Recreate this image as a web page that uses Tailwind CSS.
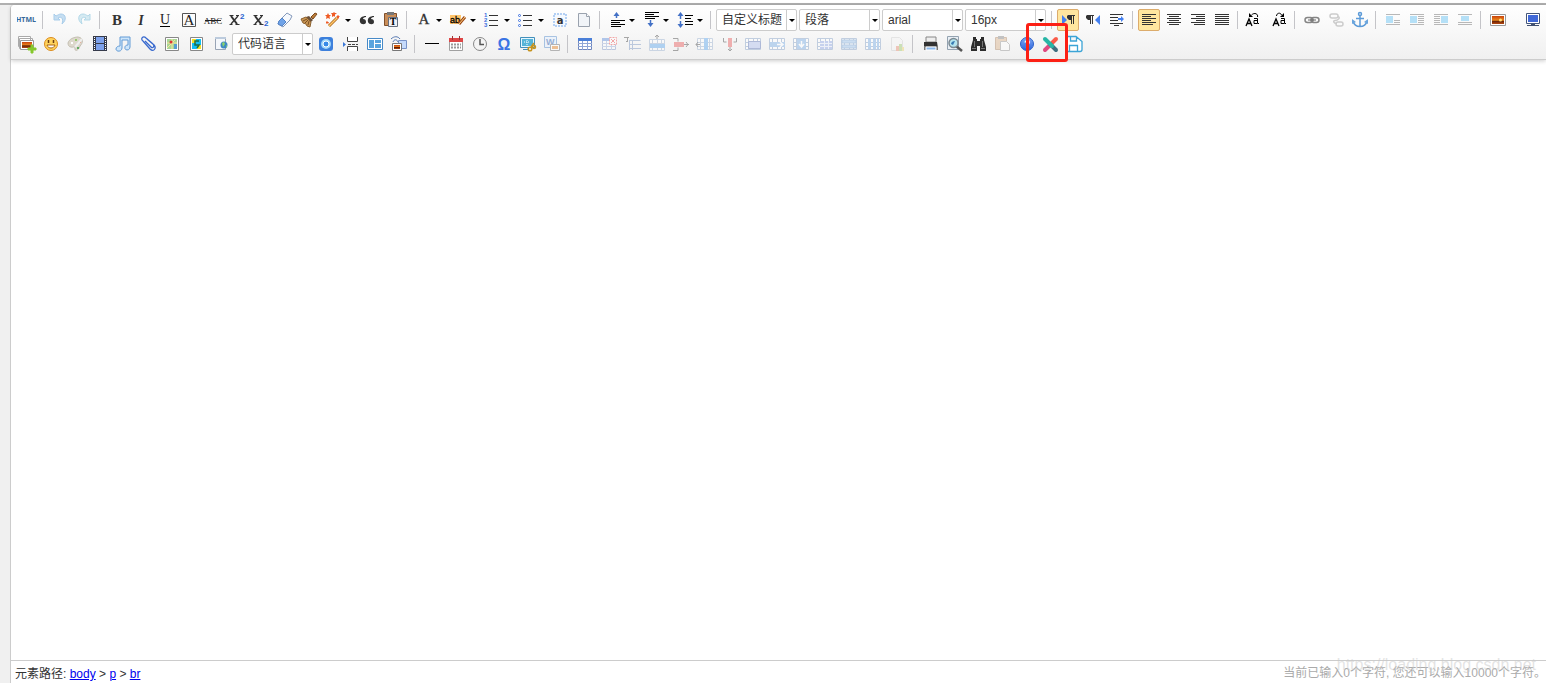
<!DOCTYPE html>
<html lang="zh-CN">
<head>
<meta charset="utf-8">
<title>UEditor</title>
<script src="https://cdn.jsdelivr.net/npm/@tailwindcss/browser@4"></script>
</head>
<body class="h-screen overflow-hidden bg-white font-['Liberation_Sans','Noto_Sans_CJK_SC',sans-serif] text-xs text-[#333]">

<!-- Shared icon parts -->
<svg class="absolute size-0" aria-hidden="true">
  <defs>
    <linearGradient id="ball" x2="0" y2="1"><stop stop-color="#7eaaf2"/><stop offset="1" stop-color="#2c63dc"/></linearGradient>
    <linearGradient id="sun" x2="0" y2="1"><stop stop-color="#c8420c"/><stop offset=".55" stop-color="#ee8a1c"/><stop offset=".6" stop-color="#5a1c06"/><stop offset="1" stop-color="#b8480e"/></linearGradient>
    <path id="arrow" d="M22 9h6l-3 3z" fill="#000"/>
    <g id="photo"><path d="M2.500 4.500h15v11h-15z" fill="#fff" stroke="#9a9a9a"/><path d="M4 6h12v8H4z" fill="url(#sun)"/><circle cx="12.500" cy="10" r="1.500" fill="#ffe27a"/></g>
    <g id="grid"><path d="M3.500 4.500h13v11h-13z" fill="#fff" stroke="#6f86bd"/><path d="M3 4h14v3H3z" fill="#4a7fd8"/><path d="M3 9.500h14M3 12.500h14M7.500 7v9M12.500 7v9" stroke="#8fa6d6" fill="none"/></g>
    <g id="cells"><path d="M2.500 4.500h15v11h-15zM2 8.500h16M2 12.500h16M5.500 4v12M10.500 4v12M14.500 4v12" fill="#fff" stroke="#8fa9cc"/></g>
    <path id="pilcrow" d="M6 5h7v1h-1v8h-1V6h-1v8H9v-4H7L5 8V6z" fill="#333"/>
    <g id="bigx" fill="none" stroke="#333"><path d="M4 6l6 8" stroke-width="2"/><path d="M11 6l-7 8" stroke-width="1.300"/><path d="M2.500 5.500h4M9 5.500h3M2.500 14.500h3M8.500 14.500h4"/></g>
  </defs>
</svg>

<div class="flex h-full flex-col pt-[3px]">
  <div class="h-0.5 shrink-0 bg-[#b0b0b0]"></div>
  <div class="flex min-h-0 flex-1 bg-[#f0f0f0] pl-2.5">
    <main class="flex min-w-0 flex-1 flex-col rounded-tl border-l border-[#ccc] bg-white">

      <div role="toolbar" aria-label="编辑器工具栏" class="rounded-tl border-b border-[#ccc] bg-linear-to-b from-white to-[#f0f0f0] pt-[3px] pb-[3px] shadow-[0_1px_4px_rgba(0,0,0,0.2)] [&_button]:flex [&_button]:h-6 [&_button]:w-6 [&_button]:shrink-0 [&_button]:items-center [&_button]:justify-center [&_hr]:mr-[5px] [&_hr]:ml-[3px] [&_hr]:h-[18px] [&_hr]:w-px [&_hr]:shrink-0 [&_hr]:border-0 [&_hr]:bg-[#c4c4c8] [&_label]:mr-0.5 [&_label]:grid [&_label]:w-[81px] [&_label]:shrink-0 [&_select]:col-start-1 [&_select]:row-start-1 [&_select]:h-[22px] [&_select]:w-full [&_select]:appearance-none [&_select]:rounded-xs [&_select]:border [&_select]:border-[#ccc] [&_select]:bg-white [&_select]:pl-[5px] [&_select]:text-xs">

        <div class="flex h-6 items-center pl-1">
          <button aria-label="源代码"><svg width="20" height="20"><text x="9" y="12" text-anchor="middle" font-size="7" font-weight="bold" font-family="Open Sans" fill="#35689a">HTML</text></svg></button><hr>
          <button aria-label="撤销"><svg width="20" height="20"><path d="M4 4v6h6L8 8c3-2 6 0 4 6 5-4 4-10-1-10-2 0-3 1-5 2z" fill="#c5def2" stroke="#a9cdea"/></svg></button>
          <button aria-label="重做"><svg width="20" height="20"><path d="M16 4v6h-6l2-2c-3-2-6 0-4 6-5-4-4-10 1-10 2 0 3 1 5 2z" fill="#d5eaf2" stroke="#b4d9e9"/></svg></button><hr>
          <button aria-label="加粗"><svg width="20" height="20"><text x="10" y="15" text-anchor="middle" font-family="Liberation Serif" font-weight="bold" font-size="15" fill="#333">B</text></svg></button>
          <button aria-label="斜体"><svg width="20" height="20"><text x="10" y="15" text-anchor="middle" font-family="Liberation Serif" font-weight="bold" font-style="italic" font-size="14" fill="#333">I</text></svg></button>
          <button aria-label="下划线"><svg width="20" height="20"><text x="10" y="14" text-anchor="middle" font-family="Liberation Serif" font-size="14" fill="#222">U</text><path d="M5 16.500h10" stroke="#000"/></svg></button>
          <button aria-label="字符边框"><svg width="20" height="20"><path d="M3.500 3.500h13v13h-13z" fill="none" stroke="#555"/><text x="10" y="15" text-anchor="middle" font-family="Liberation Serif" font-size="15" fill="#222">A</text></svg></button>
          <button aria-label="删除线"><svg width="20" height="20"><text x="10" y="14" text-anchor="middle" font-family="Liberation Serif" font-size="9" fill="#222">ABC</text><path d="M2 10.500h16" stroke="#222"/></svg></button>
          <button aria-label="上标"><svg width="20" height="20"><use href="#bigx"/><text x="13" y="9" font-size="8" font-weight="bold" fill="#2a62d0">2</text></svg></button>
          <button aria-label="下标"><svg width="20" height="20"><use href="#bigx"/><text x="13" y="16" font-size="8" font-weight="bold" fill="#2a62d0">2</text></svg></button>
          <button aria-label="清除格式"><svg width="20" height="20"><path d="M12 3l5 3-2 4-7 7-5-3 1-3z" fill="#f6f9fd" stroke="#8499bb"/><path d="M7 8l4 4-4 4-4-2 1-3z" fill="#6fa3e8" stroke="#5484c8"/></svg></button>
          <button aria-label="格式刷"><svg width="20" height="20"><path d="M16 3l2 1-4 5-2-2z" fill="#bb7d3b" stroke="#7e4a1c"/><path d="M10 6l4 4-2 2-5-5z" fill="#6b513b"/><path d="M7 7l5 5-1 5-3-1-1-2-3-1-1-2-1-2z" fill="#c99553" stroke="#8c6231"/><path d="M4 11l4-2M6 13l3-3M9 15l1-4" stroke="#795023"/></svg></button>
          <button class="w-[34px]!" aria-label="自动排版"><svg width="30" height="20"><path d="M6 16l8-8" stroke="#a96418" stroke-width="3"/><path d="M6 16l8-8" stroke="#ffc66a" stroke-width="1.500"/><path d="M5 3l1 2h2L6.500 6.500 7 9 5 8 3 9l.5-2.500L2 5h2zM11 2l1 1h2l-2 1.500V7l-1-1-2 1V4.500L8 3h2zM15 5l1 1h1l-1 1v2l-1-1-1 1V7l-1-1h1zM4 11l1 1h1l-1 2-1-1-1 1v-2z" fill="#ef5b25"/><use href="#arrow"/></svg></button>
          <button aria-label="引用"><svg width="20" height="20"><path d="M9 6C5 6 2 8 3 12c1 3 6 3 6 0 0-2-1-3-3-3 0-1 1-2 3-2zM17 6c-4 0-7 2-6 6 1 3 6 3 6 0 0-2-1-3-3-3 0-1 1-2 3-2z" fill="#333"/></svg></button>
          <button aria-label="纯文本粘贴"><svg width="20" height="20"><path d="M3.500 3.500h12v12h-12z" fill="#c98d58" stroke="#80502c"/><path d="M6 2h7v3H6z" fill="#777"/><path d="M7.500 7.500h9v9h-9z" fill="#eef1f7" stroke="#666e7e"/><text x="12" y="15" text-anchor="middle" font-family="Liberation Serif" font-weight="bold" font-size="10">T</text></svg></button><hr>
          <button class="w-[34px]!" aria-label="字体颜色"><svg width="30" height="20"><text x="10" y="14" text-anchor="middle" font-family="Liberation Serif" font-size="15" fill="#333" stroke="#333" stroke-width=".3">A</text><use href="#arrow"/></svg></button>
          <button class="w-[34px]!" aria-label="背景色"><svg width="30" height="20"><path d="M2 5h11v9H2z" fill="#ffc56c"/><text x="2" y="13" font-size="9" stroke="#000" stroke-width=".3">ab</text><path d="M11 14l6-7" stroke="#9d4814" stroke-width="3"/><path d="M11 14l6-7" stroke="#ffd486"/><use href="#arrow"/></svg></button>
          <button class="w-[34px]!" aria-label="有序列表"><svg width="30" height="20"><g font-size="6" font-weight="bold" fill="#3b6fe0"><text x="2" y="7">1</text><text x="2" y="12">2</text><text x="2" y="17">3</text></g><path d="M7 5.500h9M7 10.500h9M7 15.500h9" stroke="#333"/><use href="#arrow"/></svg></button>
          <button class="w-[34px]!" aria-label="无序列表"><svg width="30" height="20"><g fill="#fff" stroke="#3b6fe0"><circle cx="3.500" cy="5.500" r="1"/><circle cx="3.500" cy="10.500" r="1"/><circle cx="3.500" cy="15.500" r="1"/></g><path d="M7 5.500h9M7 10.500h9M7 15.500h9" stroke="#333"/><use href="#arrow"/></svg></button>
          <button aria-label="全选"><svg width="20" height="20"><path d="M4 4h12v12H4z" fill="#f4f9ff" stroke="#b4d0f4" stroke-width="2" stroke-dasharray="2 1"/><text x="10" y="14" text-anchor="middle" font-family="DejaVu Sans" font-weight="bold" font-size="10" fill="#333">a</text></svg></button>
          <button aria-label="清空文档"><svg width="20" height="20"><path d="M4.500 3.500h8l3 3v10h-11z" fill="#f1f4f8" stroke="#9aa2ae"/><path d="M12.500 3.500v3h3" fill="#fff" stroke="#9aa2ae"/></svg></button><hr>
          <button class="w-[34px]!" aria-label="段前距"><svg width="30" height="20"><path d="M4 10.500h14M4 12.500h9M4 14.500h14M4 16.500h10" stroke="#000"/><path d="M9.500 8V4" stroke="#4371c6" stroke-width="1.500"/><path d="M6.500 6l3-4 3 4z" fill="#4371c6"/><use href="#arrow"/></svg></button>
          <button class="w-[34px]!" aria-label="段后距"><svg width="30" height="20"><path d="M4 2.500h14M4 4.500h9M4 6.500h14M4 8.500h10" stroke="#000"/><path d="M9.500 10v4" stroke="#4371c6" stroke-width="1.500"/><path d="M6.500 13l3 4 3-4z" fill="#4371c6"/><use href="#arrow"/></svg></button>
          <button class="w-[34px]!" aria-label="行间距"><svg width="30" height="20"><path d="M10 5.500h8M10 8.500h6M10 11.500h8M10 14.500h8" stroke="#000"/><path d="M5.500 4v12" stroke="#4371c6" stroke-width="1.500" stroke-dasharray="5 2"/><path d="M2.500 6l3-4 3 4zM2.500 14l3 4 3-4z" fill="#4371c6"/><use href="#arrow"/></svg></button><hr>
          <label><select aria-label="自定义标题"><option>自定义标题</option></select><svg class="pointer-events-none col-start-1 row-start-1 justify-self-end" width="11" height="22"><path d="M.5 1v20" stroke="#ccc"/><path d="M3 10h6l-3 3z"/></svg></label>
          <label><select aria-label="段落格式"><option>段落</option></select><svg class="pointer-events-none col-start-1 row-start-1 justify-self-end" width="11" height="22"><path d="M.5 1v20" stroke="#ccc"/><path d="M3 10h6l-3 3z"/></svg></label>
          <label><select aria-label="字体"><option>arial</option></select><svg class="pointer-events-none col-start-1 row-start-1 justify-self-end" width="11" height="22"><path d="M.5 1v20" stroke="#ccc"/><path d="M3 10h6l-3 3z"/></svg></label>
          <label><select aria-label="字号"><option>16px</option></select><svg class="pointer-events-none col-start-1 row-start-1 justify-self-end" width="11" height="22"><path d="M.5 1v20" stroke="#ccc"/><path d="M3 10h6l-3 3z"/></svg></label><hr>
          <button class="mr-0.5 h-[22px]! w-[22px]! rounded-xs border border-[#dcac6c] bg-[#ffe69f]" aria-label="从左向右输入" aria-pressed="true"><svg width="20" height="20"><path d="M4 5l5 5-5 5z" fill="#4480f0"/><use href="#pilcrow" x="4"/></svg></button>
          <button aria-label="从右向左输入"><svg width="20" height="20"><path d="M17 5v10l-5-5z" fill="#4480f0"/><use href="#pilcrow" x="-2"/></svg></button>
          <button aria-label="首行缩进"><svg width="20" height="20"><path d="M3 4.500h13M3 7.500h8M3 10.500h8M3 13.500h13M7 15.500h5" stroke="#333"/><path d="M11 8h3V6l3 3-3 3v-2h-3z" fill="#4480f0"/></svg></button><hr>
          <button class="mr-0.5 h-[22px]! w-[22px]! rounded-xs border border-[#dcac6c] bg-[#ffe69f]" aria-label="居左对齐" aria-pressed="true"><svg width="20" height="20"><path d="M3 4.500h14M3 6.500h9M3 8.500h14M3 10.500h9M3 12.500h14M3 14.500h11" stroke="#333"/></svg></button>
          <button aria-label="居中对齐"><svg width="20" height="20"><path d="M3 4.500h14M5 6.500h10M3 8.500h14M5 10.500h10M3 12.500h14M5 14.500h10" stroke="#333"/></svg></button>
          <button aria-label="居右对齐"><svg width="20" height="20"><path d="M3 4.500h14M8 6.500h9M3 8.500h14M8 10.500h9M3 12.500h14M6 14.500h11" stroke="#333"/></svg></button>
          <button aria-label="两端对齐"><svg width="20" height="20"><path d="M3 4.500h14M3 6.500h14M3 8.500h14M3 10.500h14M3 12.500h14M3 14.500h14" stroke="#333"/></svg></button><hr>
          <button aria-label="字母大写"><svg width="20" height="20"><path d="M1 16l3-7 3 7M2 13.500h4" fill="none" stroke="#000" stroke-width="1.300"/><path d="M9 8.500h3.500v5H9v-3h4M13 13.500h1" fill="none" stroke="#000"/><path d="M12.500 7c1-3-3-5-6-2" fill="none" stroke="#000"/><path d="M4 3v4h4z"/></svg></button>
          <button aria-label="字母小写"><svg width="20" height="20"><path d="M4 16l3-7 3 7M5 13.500h4" fill="none" stroke="#000" stroke-width="1.300"/><path d="M12 8.500h3.500v5H12v-3h4M16 13.500h1" fill="none" stroke="#000"/><path d="M7.500 6c0-3 4-4 5-1" fill="none" stroke="#000"/><path d="M15 3v4h-4z"/></svg></button><hr>
          <button aria-label="超链接"><svg width="20" height="20"><g fill="none" stroke="#858585" stroke-width="1.500"><rect x="3" y="7.500" width="8" height="5" rx="2.500"/><rect x="9" y="7.500" width="8" height="5" rx="2.500"/></g><path d="M6 10h8" stroke="#666"/></svg></button>
          <button aria-label="取消链接"><svg width="20" height="20"><g fill="none" stroke="#ccc" stroke-width="1.500"><rect x="4" y="4" width="8" height="4" rx="2"/><rect x="10" y="12" width="7" height="4" rx="2"/><path d="M12 6.500c3 1 0 4-3 4-2 0-2 3 2 3"/></g></svg></button>
          <button aria-label="锚点"><svg width="20" height="20"><g fill="none" stroke="#5c9bd8" stroke-width="1.500"><circle cx="10" cy="4" r="1.500"/><path d="M10 6v11M6 8.500h8M3 11c1 4 4 5.500 7 5.500s6-1.500 7-5.500"/></g><path d="M2 9v5l4-2zM18 9v5l-4-2z" fill="#6aa5dd"/></svg></button><hr>
          <button aria-label="图片默认"><svg width="20" height="20"><path d="M3 4.500h14M11 10.500h6M11 12.500h6M3 14.500h14" stroke="#b8b8b8"/><path d="M3 6h7v7H3z" fill="#b5e0f7"/></svg></button>
          <button aria-label="图片左浮动"><svg width="20" height="20"><path d="M3 4.500h14M11 6.500h6M11 8.500h6M11 10.500h6M11 12.500h6M3 14.500h14" stroke="#b8b8b8"/><path d="M3 6h7v7H3z" fill="#b5e0f7"/></svg></button>
          <button aria-label="图片右浮动"><svg width="20" height="20"><path d="M3 4.500h14M3 6.500h6M3 8.500h6M3 10.500h6M3 12.500h6M3 14.500h14" stroke="#b8b8b8"/><path d="M10 6h7v7h-7z" fill="#b5e0f7"/></svg></button>
          <button aria-label="图片居中"><svg width="20" height="20"><path d="M3 4.500h14M3 12.500h14M3 14.500h14" stroke="#b8b8b8"/><path d="M6 6h8v5H6z" fill="#b5e0f7"/></svg></button><hr>
          <button aria-label="单图上传"><svg width="20" height="20"><use href="#photo"/></svg></button>
          <button class="mr-px ml-auto" aria-label="全屏"><svg width="20" height="20"><path d="M3.500 3.500h13v10h-13z" fill="#fff" stroke="#44567a"/><path d="M5 5h10v7H5z" fill="#4068d8"/><path d="M8 14.500h4M4 15.500h12" stroke="#405070"/></svg></button>
        </div>

        <div class="flex h-6 items-center pl-[5px]">
          <button aria-label="多图上传"><svg width="20" height="20"><path d="M.5 2.500h12v10H.5zM1.500 4.500h13v10h-13z" fill="#fff" stroke="#aaa"/><path d="M2.500 6.500h13v9h-13z" fill="#fff" stroke="#999"/><path d="M4 8h10v6H4z" fill="url(#sun)"/><path d="M13 11h2v3h3v2h-3v3h-2v-3h-3v-2h3z" fill="#85c82c" stroke="#85c82c"/></svg></button>
          <button aria-label="表情"><svg width="20" height="20"><circle cx="9" cy="10" r="6.500" fill="#ffd35c" stroke="#dc8b1c"/><path d="M5 11h8c-1 4-7 4-8 0z" fill="#fff" stroke="#a86418"/><path d="M6.500 6v3M11.500 6v3" stroke="#6d3e12" stroke-width="1.500"/></svg></button>
          <button aria-label="涂鸦"><svg width="20" height="20"><path d="M2 9c1-4 6-6 10-6 6 1 5 6 2 9-1 4-5 6-5 3 0-4-2-1-4-2-2 0-3-2-3-4z" fill="#ddd8cc" stroke="#c3beb1"/><path d="M5 8h2v2H5z" fill="#fff"/><path d="M9 5h2v2H9z" fill="#98c86f"/><path d="M13 7h2v2h-2z" fill="#e28d72"/><path d="M9 13l7-8" stroke="#eee" stroke-width="2"/><path d="M11 13h2v2h-2z" fill="#62aa62"/></svg></button>
          <button aria-label="视频"><svg width="20" height="20"><path d="M3 2h14v15H3z" fill="#363b4b"/><path d="M6 3h8v6H6zM6 10h8v6H6z" fill="#7da1ec"/><path d="M4.500 3v14M15.500 3v14" stroke="#fff" stroke-dasharray="1 1"/></svg></button>
          <button aria-label="音乐"><svg width="20" height="20"><path d="M6 3h10v10c0 4-6 4-5 0 0-1 1-2 3-2V6H8v8c0 4-6 4-6 1 0-2 2-3 4-3z" fill="#cde5fa" stroke="#639bd6"/></svg></button>
          <button aria-label="附件"><svg width="20" height="20"><path d="M7 7l6 6c2 2 4-1 2-3L8 4C5 1 2 5 5 7l7 8c3 3 7 0 4-4L9 5" fill="none" stroke="#3869ce" stroke-width="1.300"/></svg></button>
          <button aria-label="地图"><svg width="20" height="20"><path d="M3.500 3.500h13v13h-13z" fill="#fff" stroke="#888"/><path d="M5 5h10v10H5z" fill="#a8d696"/><path d="M5 9h10M10 5v10M5 14l8-8" stroke="#f6e69c"/><path d="M12 10h3v5h-3z" fill="#589ed0"/><circle cx="9" cy="8" r="1.500" fill="#d33"/></svg></button>
          <button aria-label="谷歌地图"><svg width="20" height="20"><path d="M4.500 3.500h12v13h-12z" fill="#fff" stroke="#888"/><path d="M6 5h9v10H6z" fill="#11bdf5"/><path d="M6 5h4v4H6zM11 11h4v4h-4z" fill="#f4df25"/><path d="M13 7H9v4h4l-2 3" fill="none" stroke="#176c4a" stroke-width="1.500"/></svg></button>
          <button aria-label="插入框架"><svg width="20" height="20"><path d="M5.500 3.500h10v12h-10z" fill="#f4f7fb" stroke="#98a4b5"/><path d="M5 3h11v2H5z" fill="#bccbdd"/><circle cx="14" cy="11" r="3.500" fill="#3e88c5"/><path d="M12 9l2-1 1 2-2 3zM16 11l1 1-1 2z" fill="#8bd16a"/></svg></button>
          <label><select aria-label="代码语言"><option>代码语言</option></select><svg class="pointer-events-none col-start-1 row-start-1 justify-self-end" width="11" height="22"><path d="M.5 1v20" stroke="#ccc"/><path d="M3 10h6l-3 3z"/></svg></label>
          <button aria-label="百度应用"><svg width="20" height="20"><rect x="2" y="3" width="14" height="14" rx="3" fill="#3d80dc"/><circle cx="9" cy="10" r="5" fill="#9fd6fa"/><circle cx="9" cy="10" r="3" fill="#378ae8" stroke="#fff"/></svg></button>
          <button aria-label="分页"><svg width="20" height="20"><path d="M6.500 3v4.500h10V3M6.500 17v-4.500h10V17" fill="#fff" stroke="#444"/><path d="M7 10.500h10" stroke="#444" stroke-dasharray="3 1"/><path d="M2 8l3 2.500L2 13z" fill="#3c79d8"/></svg></button>
          <button aria-label="模板"><svg width="20" height="20"><path d="M2.500 4.500h15v11h-15z" fill="#fff" stroke="#478ac7"/><path d="M4 6h5v8H4zM10 6h6v3h-6zM10 10h6v4h-6z" fill="#58a4de"/></svg></button>
          <button aria-label="远程图片"><svg width="20" height="20"><path d="M9.500 6.500h8v8h-8z" fill="#c5dafb" stroke="#7893c8"/><path d="M2 5c3-3 7-3 9 0M4 8c1-3 4-3 5 0" fill="none" stroke="#5578b2"/><path d="M3.500 9.500h9v7h-9z" fill="#fff" stroke="#777"/><path d="M5 11h6v4H5z" fill="url(#sun)"/></svg></button><hr>
          <button aria-label="分隔线"><svg width="20" height="20"><path d="M3 9.500h14" stroke="#000"/></svg></button>
          <button aria-label="日期"><svg width="20" height="20"><path d="M3.500 4.500h13v12h-13z" fill="#fff" stroke="#a0a0a0"/><path d="M3 4h14v4H3z" fill="#de4646"/><path d="M6.500 2v4M13.500 2v4" stroke="#a03434"/><path d="M5 10.500h10M5 13.500h10" stroke="#999" stroke-width="2" stroke-dasharray="2 1"/></svg></button>
          <button aria-label="时间"><svg width="20" height="20"><circle cx="10" cy="10" r="6.500" fill="#f4f4f4" stroke="#888"/><path d="M10 5v5.500h4" fill="none" stroke="#555" stroke-width="1.500"/></svg></button>
          <button aria-label="特殊字符"><svg width="20" height="20"><text x="10" y="16" text-anchor="middle" font-family="Liberation Sans" font-weight="bold" font-size="16" fill="#3b74e4">Ω</text></svg></button>
          <button aria-label="截图"><svg width="20" height="20"><path d="M2.500 3.500h14v10h-14z" fill="#e5f6ff" stroke="#4390bb"/><path d="M4 5h11v7H4z" fill="#55b4d8"/><path d="M6 8h5M9 6v5" stroke="#fff" stroke-dasharray="1 1"/><path d="M5 15.500h6" stroke="#4390bb"/><g fill="none" stroke="#c79420" stroke-width="1.500"><circle cx="12" cy="15" r="1.800"/><circle cx="16" cy="13" r="1.500"/><path d="M13 13l3-4"/></g></svg></button>
          <button aria-label="图片转存"><svg class="opacity-50" width="20" height="20"><path d="M2.500 2.500h12v11h-12z" fill="#e3f0ff" stroke="#5d91cf"/><text x="4" y="11" font-size="9" font-weight="bold" fill="#3867b4">W</text><path d="M8.500 10.500h9v6h-9z" fill="#fff" stroke="#777"/><path d="M10 12h6v3h-6z" fill="#e88c34"/></svg></button><hr>
          <button aria-label="插入表格"><svg width="20" height="20"><use href="#grid"/></svg></button>
          <button aria-label="删除表格"><svg class="opacity-40" width="20" height="20"><use href="#grid"/><path d="M10.500 3.500h7v7h-7z" fill="#fff" stroke="#e33" stroke-dasharray="2 1"/><path d="M12 5l4 4M16 5l-4 4" stroke="#e33"/></svg></button>
          <button aria-label="表格前插入行"><svg class="opacity-40" width="20" height="20"><path d="M1 3.500h5M4.500 3v4M3 7.500h2" stroke="#333"/><path d="M6.500 6.500h11M6.500 6v10M9.500 6v10M6 10.500h12M6 14.500h12" stroke="#6788bb"/></svg></button>
          <button aria-label="前插入行"><svg class="opacity-40" width="20" height="20"><use href="#cells" y="1"/><path d="M3 10h15v4H3z" fill="#4a9eee"/><path d="M10 5V1M8 3l2-2 2 2" stroke="#333" fill="none"/></svg></button>
          <button aria-label="删除行"><svg class="opacity-40" width="20" height="20"><path d="M2 4.500h5v3M2 16.500h5v-3M12 10.500h6M15 8l2 2.500-2 2.500" fill="none" stroke="#333"/><path d="M3 8h10v5H3z" fill="#e74848"/></svg></button>
          <button aria-label="前插入列"><svg class="opacity-40" width="20" height="20"><use href="#cells"/><path d="M9 4h4v12H9z" fill="#4a9eee"/><path d="M5 10.500H1M3 8l-2 2.500L3 13" stroke="#333" fill="none"/></svg></button>
          <button aria-label="删除列"><svg class="opacity-40" width="20" height="20"><path d="M4.500 4v4h3M17.500 4v4h-3M11 12v5M9 15l2 2 2-2" fill="none" stroke="#333"/><path d="M9 4h4v9H9z" fill="#e74848"/></svg></button>
          <button aria-label="合并单元格"><svg class="opacity-50" width="20" height="20"><use href="#cells"/><path d="M5.500 7.500h12v7h-12z" fill="#b5c5f0" stroke="#6b80bd"/></svg></button>
          <button aria-label="右合并单元格"><svg class="opacity-50" width="20" height="20"><use href="#cells"/><path d="M3 8h15v5H3z" fill="#86b5e8"/><path d="M10 10.500h6M13 8l3 2.500-3 2.500" stroke="#fff" stroke-width="1.500" fill="none"/></svg></button>
          <button aria-label="下合并单元格"><svg class="opacity-50" width="20" height="20"><use href="#cells"/><path d="M6 5h9v10H6z" fill="#86b5e8"/><path d="M10.500 7v6M8 10l2.500 3 2.500-3" stroke="#fff" stroke-width="1.500" fill="none"/></svg></button>
          <button aria-label="完全拆分单元格"><svg class="opacity-50" width="20" height="20"><use href="#cells"/><path d="M5 7h12v8H5z" fill="#9aafe8"/><path d="M5 9.500h12M5 12.500h12M9.500 7v8M13.500 7v8" stroke="#e8edfb"/></svg></button>
          <button aria-label="拆分成行"><svg class="opacity-50" width="20" height="20"><use href="#cells"/><path d="M3 6h14v3H3zM3 11h14v3H3z" fill="#a5c9ef" stroke="#7fa8d6"/></svg></button>
          <button aria-label="拆分成列"><svg class="opacity-50" width="20" height="20"><use href="#cells"/><path d="M5 5h3v10H5zM10 5h3v10h-3zM14 5h2v10h-2z" fill="#86b5e8"/></svg></button>
          <button aria-label="图表"><svg class="opacity-30" width="20" height="20"><path d="M4.500 3.500h8l3 3v10h-11z" fill="#f4f4f4" stroke="#bbb"/><path d="M9 12h3v5H9z" fill="#e05a30"/><path d="M12 10h3v7h-3z" fill="#70b52d"/><path d="M15 13h2v4h-2z" fill="#e7c230"/></svg></button><hr>
          <button aria-label="打印"><svg width="20" height="20"><path d="M6 3h10v5H6z" fill="#eee" stroke="#888"/><path d="M4 8h13l1 6H4z" fill="#333"/><path d="M4 12h14v4H4z" fill="#777"/><path d="M6 13h10v3H6z" fill="#8bb9ee" stroke="#fff"/></svg></button>
          <button aria-label="预览"><svg width="20" height="20"><path d="M3.500 2.500h11v13h-11z" fill="#e9eff5" stroke="#94a3b1"/><path d="M12 12l6 5" stroke="#555" stroke-width="2.500"/><circle cx="9.500" cy="9" r="4.500" fill="#b4e4ee" stroke="#7d8a92" stroke-width="1.500"/><path d="M7 10c0-2 2-3 4-3l-2 4z" fill="#377bb3"/></svg></button>
          <button aria-label="查询替换"><svg width="20" height="20"><path d="M5 3h3v2h1v2h3V5h1V3h3v3l2 7v4h-6v-5H9v5H3v-4l2-7z" fill="#2c2c2c"/><path d="M6.500 7v6M14.500 7v6M4 14.500h4M13 14.500h4" stroke="#777"/></svg></button>
          <button aria-label="粘贴"><svg class="opacity-40" width="20" height="20"><path d="M3.500 3.500h11v12h-11z" fill="#d8ab7e" stroke="#a57750"/><path d="M6 2h6v3H6z" fill="#777"/><path d="M8.500 7.500h6l3 3v6h-9z" fill="#fff" stroke="#888"/></svg></button>
          <button aria-label="帮助"><svg width="20" height="20"><circle cx="11" cy="10" r="6.500" fill="url(#ball)" stroke="#2e61c9"/><text x="11" y="14" text-anchor="middle" font-size="10" font-weight="bold" fill="#fff">?</text></svg></button>
          <div class="relative">
            <button aria-label="扩展插件"><svg width="20" height="20"><g stroke-width="4" stroke-linecap="round"><path d="M16 5l-5 5" stroke="#fa5b49"/><path d="M10 11l-5 5" stroke="#df4a80"/><path d="M10 10l6 6" stroke="#3f6f80"/><path d="M5 5l7 7" stroke="#27b5a5"/></g></svg></button>
            <div class="pointer-events-none absolute -top-[9px] -left-3 z-10 h-[39px] w-[42px] rounded-[3px] border-3 border-[#fc2015]"></div>
          </div>
          <button aria-label="保存"><svg width="20" height="20"><path d="M3 2.500h9l6 5v8c0 1-.5 2-2 2H3zM6.500 3v4h6V3M5.500 17v-5.500h8V17" fill="#fff" stroke="#3ba4d6" stroke-width="1.300"/></svg></button>
        </div>
      </div>

      <div class="min-h-0 flex-1 outline-none" contenteditable="true" role="textbox" aria-multiline="true" aria-label="编辑区"></div>

      <footer class="relative flex h-[23px] shrink-0 items-center justify-between border-t border-[#ccc] pl-1">
        <nav class="pt-1" aria-label="元素路径">元素路径: <a class="text-[#00e] underline" href="#body">body</a> &gt; <a class="text-[#00e] underline" href="#p">p</a> &gt; <a class="text-[#00e] underline" href="#br">br</a></nav>
        <div class="pt-0.5 text-[#aaa]">当前已输入0个字符, 您还可以输入10000个字符。</div>
        <div class="pointer-events-none absolute right-2.5 bottom-2 text-base leading-5 text-[#c8c8c8]/50">https://loading.blog.csdn.net</div>
      </footer>
    </main>
  </div>
</div>
</body>
</html>
